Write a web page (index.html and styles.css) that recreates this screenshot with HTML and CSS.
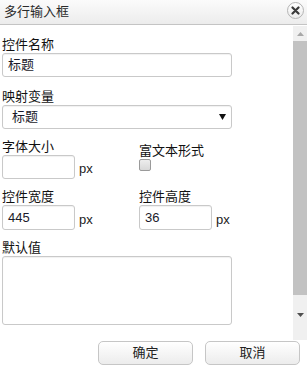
FILE: index.html
```html
<!DOCTYPE html>
<html>
<head>
<meta charset="utf-8">
<link rel="stylesheet" href="styles.css">
</head>
<body>
<div class="dialog">
  <div class="titlebar">
    <span class="title">多行输入框</span>
    <span class="close"><svg width="9" height="9" viewBox="0 0 9 9"><path d="M1.5 1.5 L7.5 7.5 M7.5 1.5 L1.5 7.5" stroke="#3a3a3a" stroke-width="2.2" stroke-linecap="round"/></svg></span>
  </div>
  <div class="scrollarea">
    <div class="content">
      <div class="field">
        <div class="label">控件名称</div>
        <div class="input wide">标题</div>
      </div>
      <div class="field f2">
        <div class="label">映射变量</div>
        <div class="select wide"><span>标题</span><svg width="7" height="6" viewBox="0 0 7 6"><path d="M0 0 H7 L3.5 6 Z" fill="#111"/></svg></div>
      </div>
      <div class="row r3">
        <div class="col">
          <div class="label">字体大小</div>
          <div class="inline"><div class="input small"></div><span class="unit">px</span></div>
        </div>
        <div class="col colr">
          <div class="label">富文本形式</div>
          <div class="checkbox"></div>
        </div>
      </div>
      <div class="row r4">
        <div class="col">
          <div class="label">控件宽度</div>
          <div class="inline"><div class="input small">445</div><span class="unit">px</span></div>
        </div>
        <div class="col">
          <div class="label">控件高度</div>
          <div class="inline"><div class="input small">36</div><span class="unit">px</span></div>
        </div>
      </div>
      <div class="field f5">
        <div class="label">默认值</div>
        <div class="textarea wide"></div>
      </div>
    </div>
    <div class="scrollbar">
      <div class="sbtn up"><svg width="7" height="4" viewBox="0 0 7 4"><path d="M0 4 L3.5 0 L7 4 Z" fill="#a8a8a8"/></svg></div>
      <div class="thumb"></div>
      <div class="sbtn down"><svg width="7" height="4" viewBox="0 0 7 4"><path d="M0 0 L7 0 L3.5 4 Z" fill="#505050"/></svg></div>
    </div>
  </div>
  <div class="footer">
    <button class="btn">确定</button>
    <button class="btn">取消</button>
  </div>
</div>
</body>
</html>
```
FILE: styles.css
```css
html, body {
  margin: 0;
  padding: 0;
  background: #fff;
}
body {
  font-family: "Liberation Sans", "Noto Sans CJK SC", sans-serif;
  font-size: 13px;
  color: #111;
}
.dialog {
  width: 307px;
  height: 379px;
  display: flex;
  flex-direction: column;
  overflow: hidden;
}
.titlebar {
  height: 25px;
  box-sizing: border-box;
  border-bottom: 1px solid #c4c4c4;
  background: linear-gradient(#fbfbfb, #ececec);
  display: flex;
  align-items: center;
  justify-content: space-between;
  padding: 0 3px 0 4px;
}
.title {
  color: #2a2a2a;
  font-size: 13px;
  line-height: 16px;
  margin-top: -1px;
}
.close {
  width: 17px;
  height: 17px;
  box-sizing: border-box;
  border: 1px solid #b4b4b4;
  border-radius: 50%;
  background: linear-gradient(#ffffff, #ececec);
  display: flex;
  align-items: center;
  justify-content: center;
  margin-top: -4px;
}
.scrollarea {
  height: 315px;
  display: flex;
}
.content {
  flex: 1;
  padding: 12px 0 0 2px;
}
.label {
  line-height: 16px;
  height: 16px;
  color: #111;
  white-space: nowrap;
}
.input, .select, .textarea {
  box-sizing: border-box;
  border: 1px solid #c9c9c9;
  border-radius: 3px;
  background: #fff;
  color: #1a1a2a;
  box-shadow: inset 0 1px 1px rgba(0,0,0,0.06);
}
.input {
  height: 24px;
  line-height: 22px;
  padding-left: 5px;
}
.wide {
  width: 230px;
}
.f2 {
  margin-top: 12px;
}
.select {
  height: 24px;
  line-height: 22px;
  padding: 0 5px 0 9px;
  display: flex;
  align-items: center;
  justify-content: space-between;
}
.row {
  display: flex;
}
.r3 {
  margin-top: 10px;
}
.r4 {
  margin-top: 10px;
}
.col {
  width: 137px;
}
.colr {
  padding-top: 4px;
}
.inline {
  display: flex;
  align-items: center;
}
.small {
  width: 73px;
}
.r4 .input {
  height: 25px;
  line-height: 23px;
}
.unit {
  margin-left: 4px;
  color: #222;
  font-size: 13px;
  margin-top: 3px;
}
.checkbox {
  width: 12px;
  height: 12px;
  box-sizing: border-box;
  border: 1px solid #9a9a9a;
  border-radius: 2px;
  background: linear-gradient(#ededed, #d8d8d8);
}
.f5 {
  margin-top: 10px;
}
.textarea {
  height: 69px;
}
.scrollbar {
  width: 14px;
  background: #f0f0f0;
  display: flex;
  flex-direction: column;
  margin-top: 1px;
}
.sbtn {
  display: flex;
  justify-content: center;
}
.up {
  height: 15px;
  align-items: center;
}
.thumb {
  height: 254px;
  background: #c2c2c2;
}
.down {
  flex: 1;
  align-items: flex-start;
  padding-top: 18px;
}
.footer {
  display: flex;
  justify-content: flex-end;
  gap: 12px;
  padding: 1px 7px 0 0;
}
.btn {
  width: 95px;
  height: 24px;
  box-sizing: border-box;
  border: 1px solid #c6c6c6;
  border-radius: 5px;
  background: linear-gradient(#ffffff, #ececec);
  font-family: "Liberation Sans", "Noto Sans CJK SC", sans-serif;
  font-size: 13px;
  color: #222;
  padding: 0;
  line-height: 22px;
}
```
